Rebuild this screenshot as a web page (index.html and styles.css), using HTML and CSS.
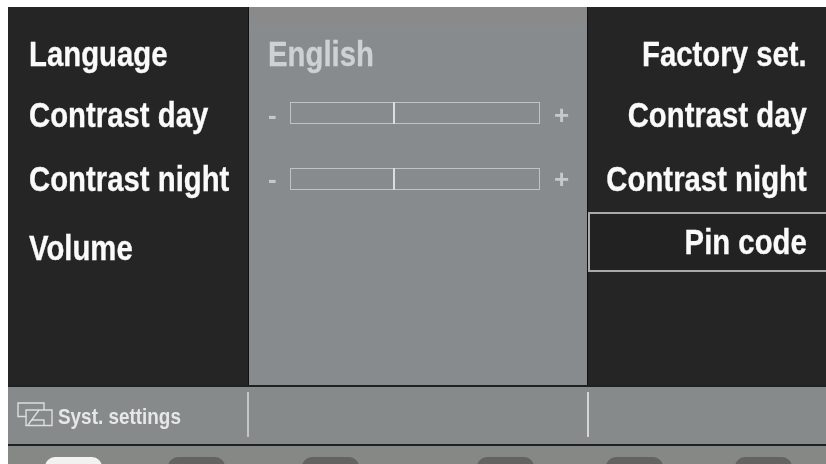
FILE: index.html
```html
<!DOCTYPE html>
<html lang="en">
<head>
<meta charset="utf-8">
<title>Syst. settings</title>
<link rel="stylesheet" href="styles.css">
</head>
<body>
<div class="screen">
  <main class="panels">
    <section class="panel menu">
      <div class="row r1"><span class="txt">Language</span></div>
      <div class="row r2"><span class="txt">Contrast day</span></div>
      <div class="row r3"><span class="txt">Contrast night</span></div>
      <div class="row r4"><span class="txt">Volume</span></div>
    </section>
    <section class="panel values">
      <div class="row r1"><span class="txt">English</span></div>
      <div class="row r2 slider-row">
        <span class="sign minus">-</span>
        <div class="track"><i class="mark"></i></div>
        <span class="sign plus">+</span>
      </div>
      <div class="row r3 slider-row">
        <span class="sign minus">-</span>
        <div class="track"><i class="mark"></i></div>
        <span class="sign plus">+</span>
      </div>
    </section>
    <section class="panel menu right">
      <div class="row r1"><span class="txt">Factory set.</span></div>
      <div class="row r2"><span class="txt">Contrast day</span></div>
      <div class="row r3"><span class="txt">Contrast night</span></div>
      <div class="row r4 selected"><span class="txt">Pin code</span></div>
    </section>
  </main>
  <footer class="status">
    <div class="cell first">
      <svg class="icon" width="36" height="26" viewBox="0 0 36 26" fill="none" stroke="#dcdede" stroke-width="1.4">
        <path d="M9.500 14.500H1V1h26v7"/>
        <path d="M9 8h26v15.500H9z"/>
        <path d="M11 23 22 8M15 18h12v5"/>
      </svg>
      <span class="title">Syst. settings</span>
    </div>
    <div class="cell second"></div>
    <div class="cell third"></div>
  </footer>
  <nav class="keys">
    <span class="key on"></span>
    <span class="key k2"></span>
    <span class="key k3"></span>
    <span class="key k4"></span>
    <span class="key k5"></span>
    <span class="key k6"></span>
  </nav>
</div>
</body>
</html>
```
FILE: styles.css
```css
html, body {
  margin: 0;
  height: 100%;
  background: #fff;
  overflow: hidden;
}
.screen {
  width: 818px;
  height: 457px;
  margin: 7px 0 0 8px;
  display: flex;
  flex-direction: column;
  background: #868888;
  font-family: "Liberation Sans", Arial, sans-serif;
  font-weight: 700;
  filter: blur(0.45px);
  overflow: hidden;
}
.panels {
  display: flex;
  height: 378px;
  flex: none;
}
.panel {
  box-sizing: border-box;
  padding-top: 16px;
  font-size: 34.5px;
}
.menu {
  width: 240px;
  flex: none;
  background: #252525;
  color: #fafafa;
  padding-left: 20.5px;
}
.values {
  width: 339px;
  flex: none;
  background: linear-gradient(#8b8988, #888b8d 24px);
  color: #ced1d2;
  padding-left: 19px;
  border-left: 1px solid #111;
}
.right {
  flex: 1;
  padding: 16px 20px 0 0;
  text-align: right;
  border-left: 1px solid #111;
}
.row {
  display: flex;
  align-items: center;
  line-height: 1;
  white-space: nowrap;
}
.txt {
  display: inline-block;
  transform: scaleX(0.85);
  transform-origin: left center;
  -webkit-text-stroke: 0.3px currentColor;
}
.right .row { justify-content: flex-end; }
.right .txt { transform-origin: right center; }
.r1 { height: 62px; }
.r2 { height: 60px; }
.r3 { height: 68px; }
.r4 { height: 70px; }
.selected {
  box-sizing: border-box;
  height: 60px;
  margin: -1px -20px 0 0;
  padding-right: 20px;
  border: 2px solid #a8aaaa;
  border-right: 0;
  background: #222;
}
.sign {
  width: 22px;
  flex: none;
  font-size: 26px;
  color: #c6c9ca;
}
.plus {
  margin-left: 14px;
  font-size: 26px;
}
.track {
  position: relative;
  box-sizing: border-box;
  width: 250px;
  height: 22px;
  border: 1px solid #c0c3c4;
}
.r2 .track { margin-bottom: 4px; }
.mark {
  position: absolute;
  left: 102px;
  top: -1px;
  bottom: -1px;
  width: 2px;
  background: #dcdede;
}
.status {
  display: flex;
  height: 57px;
  flex: none;
  border-top: 2px solid #1e2122;
  border-bottom: 2px solid #1e2122;
  background: #868a8b;
  color: #e6e8e8;
}
.cell {
  display: flex;
  align-items: center;
  margin: 5px 0 7px;
  box-sizing: border-box;
}
.first {
  width: 241px;
  padding-left: 9px;
  border-right: 2px solid #c5c7c7;
}
.second {
  width: 340px;
  border-right: 2px solid #d5d7d7;
}
.third { flex: 1; }
.icon {
  flex: none;
  margin-right: 5px;
}
.title {
  display: inline-block;
  font-size: 22.5px;
  line-height: 1;
  margin-top: 6px;
  transform: scaleX(0.84);
  transform-origin: left center;
}
.keys {
  display: flex;
  flex: 1;
  padding: 11px 0 0 37px;
  background: #868886;
}
.key {
  width: 57px;
  height: 20px;
  flex: none;
  border-radius: 10px 10px 0 0;
  background: #636361;
}
.key.on { background: #f2f2f0; }
.k2 { margin-left: 66px; }
.k3 { margin-left: 77px; }
.k4 { margin-left: 118px; }
.k5 { margin-left: 72px; }
.k6 { margin-left: 72px; }
```
